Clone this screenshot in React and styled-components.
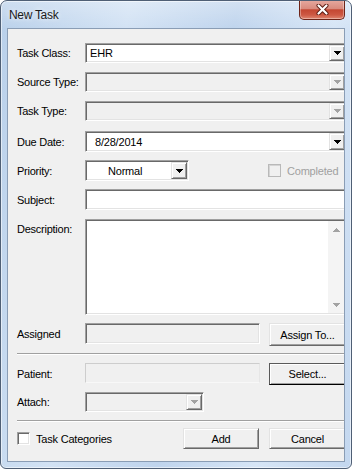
import React from 'react';
import styled, { createGlobalStyle, css } from 'styled-components';

const Global = createGlobalStyle`
  html, body { margin: 0; padding: 0; background: #fff; }
  body { font-family: "Liberation Sans", Arial, sans-serif; }
  * { box-sizing: border-box; }
`;

const sunken = css`
  border: 1px solid;
  border-color: #a0a0a0 #fff #fff #a0a0a0;
  box-shadow: inset 1px 1px 0 #696969, inset -1px -1px 0 #e3e3e3;
`;

const raised = css`
  background: #f0f0f0;
  border: 1px solid;
  border-color: #e3e3e3 #696969 #696969 #e3e3e3;
  box-shadow: inset 1px 1px 0 #fff, inset -1px -1px 0 #a0a0a0;
`;

const Window = styled.div`
  width: 352px;
  height: 469px;
  border: 1px solid #4f5f75;
  border-radius: 7px 7px 6px 6px;
  background:
    linear-gradient(180deg, rgba(255, 255, 255, 0.3) 0px, rgba(255, 255, 255, 0) 28px),
    linear-gradient(100deg, #b9d0ea 0%, #d2e2f4 30%, #bfd4ed 55%, #d6e5f6 78%, #c3d7ef 100%);
  box-shadow: inset 0 0 0 1px rgba(255, 255, 255, 0.55);
  display: flex;
  flex-direction: column;
  padding: 0 6px 6px;
  overflow: hidden;
`;

const TitleBar = styled.div`
  height: 27px;
  flex-shrink: 0;
  display: flex;
  justify-content: space-between;
  align-items: flex-start;
  padding-left: 2px;
`;

const Title = styled.div`
  align-self: center;
  margin-top: 1px;
  font-size: 12px;
  letter-spacing: -0.3px;
  color: #1a1a1a;
  text-shadow: 0 0 5px rgba(255, 255, 255, 0.95);
`;

const CloseButton = styled.div`
  width: 46px;
  height: 20px;
  margin-top: -1px;
  border: 1px solid #6e2418;
  border-top: none;
  border-radius: 0 0 5px 5px;
  background: linear-gradient(180deg, #e6aaa0 0%, #d98b7e 45%, #c44732 52%, #cd5843 78%, #df8670 100%);
  box-shadow: inset 0 0 0 1px rgba(255, 255, 255, 0.35);
  display: flex;
  align-items: center;
  justify-content: center;
`;

const Content = styled.div`
  flex: 1;
  background: #f0f0f0;
  border: 1px solid #8a9db5;
  overflow: hidden;
  display: flex;
  flex-direction: column;
  padding-left: 9px;
`;

const Row = styled.div`
  display: flex;
  align-items: flex-start;
  flex-shrink: 0;
  height: ${(p) => p.$h}px;
  margin-top: ${(p) => p.$mt}px;
`;

const Label = styled.div`
  width: 68px;
  flex-shrink: 0;
  height: ${(p) => (p.$h ? `${p.$h}px` : '100%')};
  display: flex;
  align-items: ${(p) => (p.$top ? 'flex-start' : 'center')};
  padding-top: ${(p) => (p.$top ? '4px' : '0')};
  font-size: 11px;
  letter-spacing: -0.25px;
  color: #000;
  white-space: nowrap;
`;

const Combo = styled.div`
  ${sunken};
  width: ${(p) => p.$w}px;
  height: 100%;
  flex-shrink: 0;
  padding: 1px;
  display: flex;
  align-items: stretch;
  background: ${(p) => (p.$disabled ? '#f0f0f0' : '#fff')};
`;

const ComboText = styled.div`
  flex: 1;
  display: flex;
  align-items: center;
  padding-left: ${(p) => p.$pl}px;
  font-size: 11px;
  letter-spacing: -0.2px;
  color: #000;
`;

const DropButton = styled.div`
  ${raised};
  width: 16px;
  flex-shrink: 0;
  display: flex;
  align-items: center;
  justify-content: center;
`;

const Edit = styled.div`
  ${sunken};
  width: ${(p) => p.$w}px;
  height: ${(p) => p.$h}px;
  flex-shrink: 0;
  background: ${(p) => (p.$disabled ? '#f0f0f0' : '#fff')};
`;

const FlatEdit = styled.div`
  width: ${(p) => p.$w}px;
  height: ${(p) => p.$h}px;
  flex-shrink: 0;
  border: 1px solid;
  border-color: #cdcdcd #e6e6e6 #f8f8f8 #cdcdcd;
  background: #f0f0f0;
`;

const Memo = styled.div`
  ${sunken};
  width: 262px;
  height: 100%;
  flex-shrink: 0;
  padding: 1px;
  background: #fff;
  display: flex;
  justify-content: flex-end;
`;

const ScrollBar = styled.div`
  width: 17px;
  background: #f4f4f4;
  display: flex;
  flex-direction: column;
  justify-content: space-between;
`;

const ScrollArrow = styled.div`
  height: 17px;
  display: flex;
  align-items: center;
  justify-content: center;
`;

const Button = styled.div`
  ${raised};
  width: ${(p) => p.$w}px;
  height: ${(p) => p.$h}px;
  margin-left: ${(p) => p.$ml || 0}px;
  flex-shrink: 0;
  display: flex;
  align-items: center;
  justify-content: center;
  font-size: 11px;
  letter-spacing: -0.2px;
  color: #000;
  ${(p) =>
    p.$default &&
    css`
      border-color: #5a5a5a #000 #000 #5a5a5a;
    `}
`;

const Separator = styled.div`
  flex-shrink: 0;
  height: 2px;
  margin-top: ${(p) => p.$mt}px;
  border-top: 1px solid #a0a0a0;
  border-bottom: 1px solid #fff;
`;

const CheckGroup = styled.div`
  display: flex;
  align-items: center;
  gap: ${(p) => p.$gap}px;
  height: 100%;
  width: ${(p) => (p.$w ? `${p.$w}px` : 'auto')};
  margin-left: ${(p) => p.$ml || 0}px;
  flex-shrink: 0;
`;

const CheckBox = styled.div`
  width: 13px;
  height: 13px;
  flex-shrink: 0;
  ${(p) =>
    p.$disabled
      ? css`
          border: 1px solid #b9b9b9;
          background: #f0f0f0;
          box-shadow: inset 1px 1px 0 #d4d4d4;
        `
      : css`
          ${sunken};
          background: #fff;
        `}
`;

const CheckText = styled.span`
  font-size: 11px;
  letter-spacing: -0.2px;
  color: ${(p) => (p.$disabled ? '#a0a0a0' : '#000')};
  white-space: nowrap;
`;

const Arrow = ({ color = '#000', up = false }) => (
  <svg width="7" height="4" viewBox="0 0 7 4" shapeRendering="crispEdges">
    <path
      d={
        up
          ? 'M3 0h1v1h1v1h1v1h1v1h-7v-1h1v-1h1v-1h1z'
          : 'M0 0h7v1h-1v1h-1v1h-1v1h-1v-1h-1v-1h-1v-1h-1z'
      }
      fill={color}
    />
  </svg>
);

const CloseGlyph = () => (
  <svg width="13" height="11" viewBox="0 0 13 11">
    <path d="M2.5 1.5 L10.5 9.5 M10.5 1.5 L2.5 9.5" stroke="#5b1a10" strokeWidth="4" strokeLinecap="round" />
    <path d="M2.5 1.5 L10.5 9.5 M10.5 1.5 L2.5 9.5" stroke="#fff" strokeWidth="2.2" strokeLinecap="round" />
  </svg>
);

const ComboBox = ({ w, disabled, text, pl = 3 }) => (
  <Combo $w={w} $disabled={disabled}>
    <ComboText $pl={pl}>{text}</ComboText>
    <DropButton>
      <Arrow color={disabled ? '#a3a3a3' : '#000'} />
    </DropButton>
  </Combo>
);

export default function App() {
  return (
    <>
      <Global />
      <Window>
        <TitleBar>
          <Title>New Task</Title>
          <CloseButton>
            <CloseGlyph />
          </CloseButton>
        </TitleBar>
        <Content>
          <Row $h={20} $mt={14}>
            <Label>Task Class:</Label>
            <ComboBox w={262} text="EHR" />
          </Row>
          <Row $h={20} $mt={9}>
            <Label>Source Type:</Label>
            <ComboBox w={262} disabled />
          </Row>
          <Row $h={20} $mt={9}>
            <Label>Task Type:</Label>
            <ComboBox w={262} disabled />
          </Row>
          <Row $h={21} $mt={10}>
            <Label>Due Date:</Label>
            <ComboBox w={262} text="8/28/2014" pl={8} />
          </Row>
          <Row $h={21} $mt={8}>
            <Label>Priority:</Label>
            <ComboBox w={104} text="Normal" pl={21} />
            <CheckGroup $gap={6} $ml={79}>
              <CheckBox $disabled />
              <CheckText $disabled>Completed</CheckText>
            </CheckGroup>
          </Row>
          <Row $h={21} $mt={8}>
            <Label>Subject:</Label>
            <Edit $w={262} $h={21} />
          </Row>
          <Row $h={96} $mt={9}>
            <Label $top>Description:</Label>
            <Memo>
              <ScrollBar>
                <ScrollArrow>
                  <Arrow up color="#a3a3a3" />
                </ScrollArrow>
                <ScrollArrow>
                  <Arrow color="#a3a3a3" />
                </ScrollArrow>
              </ScrollBar>
            </Memo>
          </Row>
          <Row $h={23} $mt={8}>
            <Label $h={21}>Assigned</Label>
            <Edit $w={175} $h={21} $disabled />
            <Button $w={77} $h={23} $ml={9}>Assign To...</Button>
          </Row>
          <Separator $mt={7} />
          <Row $h={22} $mt={8}>
            <Label $h={21}>Patient:</Label>
            <FlatEdit $w={175} $h={20} />
            <Button $w={77} $h={22} $ml={9} $default>Select...</Button>
          </Row>
          <Row $h={20} $mt={7}>
            <Label>Attach:</Label>
            <ComboBox w={119} disabled />
          </Row>
          <Separator $mt={8} />
          <Row $h={21} $mt={6}>
            <CheckGroup $gap={6} $w={166}>
              <CheckBox />
              <CheckText>Task Categories</CheckText>
            </CheckGroup>
            <Button $w={76} $h={21}>Add</Button>
            <Button $w={77} $h={21} $ml={10}>Cancel</Button>
          </Row>
        </Content>
      </Window>
    </>
  );
}
